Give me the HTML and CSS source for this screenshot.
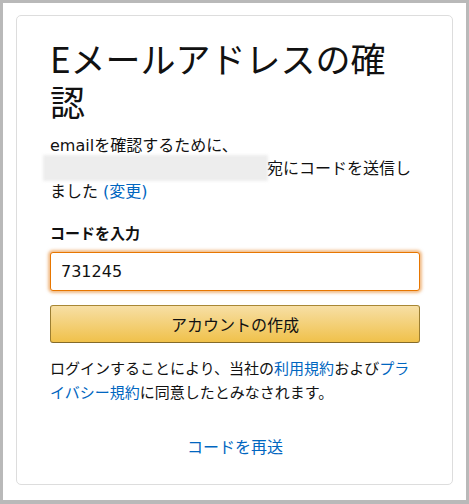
FILE: index.html
```html
<!DOCTYPE html>
<html>
<head>
    <title>Eメールアドレスの確認</title>
    <link rel="stylesheet" href="styles.css">
</head>
<body>
    <div class="frame">
        <div class="card">
            <h1 class="title">Eメールアドレスの確認</h1>
            <p class="sent">emailを確認するために、<br><span class="redacted"></span>宛にコードを送信しました <a href="#">(変更)</a></p>

            <label class="field-label" for="code">コードを入力</label>
            <input class="code-input" id="code" type="text" value="731245">

            <button class="primary-button">アカウントの作成</button>

            <p class="legal">ログインすることにより、当社の<a href="#">利用規約</a>および<a href="#">プライバシー規約</a>に同意したとみなされます。</p>

            <div class="resend"><a href="#">コードを再送</a></div>
        </div>
    </div>
</body>
</html>
```

FILE: styles.css
```css
body {
    margin: 0;
    background: #b9b9b9;
    font-family: 'DejaVu Sans', 'Noto Sans CJK JP', sans-serif;
    color: #111;
}
.frame {
    margin: 3px 3px 4px 3px;
    height: 497px;
    background: #fff;
    padding: 12px 13px 0 13px;
    box-sizing: border-box;
}
.card {
    border: 1px solid #ddd;
    border-radius: 5px;
    height: 470px;
    box-sizing: border-box;
    padding: 20px 32px 0 33px;
}
a {
    color: #0066c0;
    text-decoration: none;
}
.title {
    margin: 0 0 12px 0;
    font-family: 'Noto Sans CJK JP', sans-serif;
    font-weight: normal;
    font-size: 35px;
    line-height: 43px;
}
.sent {
    margin: 0;
    font-size: 16px;
    line-height: 23px;
}
.redacted {
    display: inline-block;
    width: 219px;
    height: 20px;
    margin-left: -4px;
    margin-right: 2px;
    vertical-align: -4px;
    background: #ededed;
    box-shadow: 0 0 0 3px #ededed;
    filter: blur(1.5px);
}
.field-label {
    display: block;
    margin-top: 20px;
    font-weight: bold;
    font-size: 15px;
    line-height: 22px;
}
.code-input {
    display: block;
    width: 100%;
    box-sizing: border-box;
    height: 39px;
    margin-top: 7px;
    padding: 0 10px;
    border: 1px solid #e77600;
    border-radius: 3px;
    box-shadow: 0 0 3px 2px rgba(228, 121, 17, 0.5);
    font-family: 'DejaVu Sans', sans-serif;
    font-size: 16px;
    color: #111;
    outline: none;
}
.primary-button {
    display: block;
    width: 100%;
    height: 38px;
    margin-top: 14px;
    border: 1px solid;
    border-color: #a88734 #9c7e31 #846a29;
    border-radius: 3px;
    background: linear-gradient(to bottom, #f7dfa5, #f0c14b);
    font-family: 'Noto Sans CJK JP', sans-serif;
    font-size: 16px;
    color: #111;
}
.legal {
    margin: 14px 0 0 0;
    font-size: 15px;
    line-height: 24px;
}
.resend {
    margin-top: 29px;
    text-align: center;
    font-size: 16px;
}
```
